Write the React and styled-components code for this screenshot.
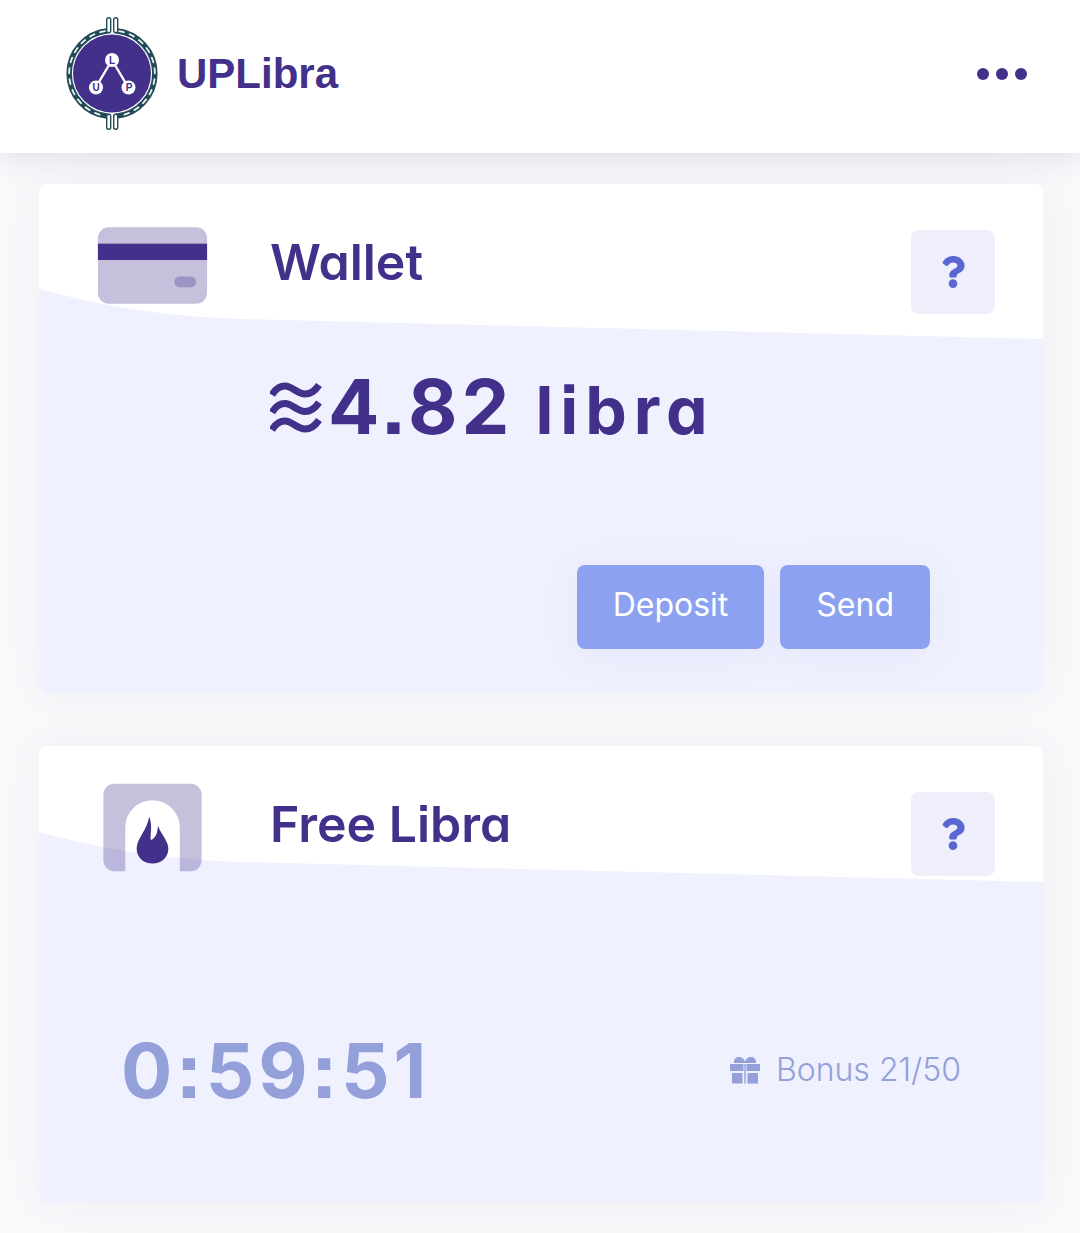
import styled, { createGlobalStyle } from "styled-components";
import { FaQuestion } from "react-icons/fa";

const GlobalStyle = createGlobalStyle`
  * {
    box-sizing: border-box;
  }

  body {
    margin: 0;
    background: #f9f9fc;
    color: #42308a;
    font-family: Inter, "Open Sans", sans-serif;
    font-feature-settings: "cv11", "ss07";
  }
`;

const Header = styled.header`
  position: relative;
  display: flex;
  align-items: center;
  justify-content: space-between;
  padding: 16px 53px 22px 66px;
  background: #fff;
  box-shadow: 0 2px 28px rgba(60, 60, 80, 0.16);
`;

const Brand = styled.a`
  display: flex;
  align-items: center;
  gap: 19px;
  color: inherit;
  font: bold 42px/48px "Liberation Sans", Arial, sans-serif;
  text-decoration: none;
`;

const MenuButton = styled.button`
  display: flex;
  gap: 7px;
  padding: 16px 0;
  border: 0;
  background: none;
`;

const Dot = styled.span`
  width: 12px;
  height: 12px;
  border-radius: 50%;
  background: #42308a;
`;

const Content = styled.main`
  display: grid;
  gap: 53px;
  padding: 31px 37px 30px 39px;
`;

const Card = styled.section`
  position: relative;
  border-radius: 8px;
  background: #fff;
  box-shadow: 0 0 40px rgba(80, 80, 100, 0.06);
`;

const Backdrop = styled.div`
  position: absolute;
  inset: ${({ $top }) => $top}px 0 0;
  display: flex;
  flex-direction: column;
  overflow: hidden;
  border-radius: 0 0 8px 8px;
`;

const Wave = styled.svg`
  display: block;
  flex: none;
  width: 100%;
  height: 51px;
  fill: #eff1fe;
`;

const Fill = styled.div`
  flex: 1;
  margin-top: -1px;
  background: #eff1fe;
`;

const CardBody = styled.div`
  position: relative;
  padding: 16px 48px 44px;
`;

const CardHead = styled.div`
  display: flex;
  align-items: center;
`;

const CardIcon = styled.svg`
  flex: none;
  width: 131px;
  height: 131px;
  fill: #42308a;
`;

const Title = styled.h2`
  flex: 1;
  margin: 0 0 8px 52px;
  font-size: 50px;
  font-weight: 600;
  line-height: 56px;
`;

const HelpButton = styled.button`
  display: grid;
  place-items: center;
  align-self: flex-start;
  width: 84px;
  height: 84px;
  margin-top: 30px;
  border: 0;
  border-radius: 8px;
  background: #eeeffb;
  color: #5a67d2;
  font-size: 32px;
`;

const Amount = styled.div`
  display: flex;
  align-items: baseline;
  margin: 27px 0 0 183px;
  font-size: 76px;
  font-weight: 700;
  line-height: 96px;
  letter-spacing: 4px;
`;

const Sign = styled.svg`
  width: 52px;
  height: 56px;
  margin-right: 6px;
  fill: none;
  stroke: #42308a;
  stroke-width: 7;
`;

const Unit = styled.span`
  margin-left: 22px;
  font-size: 66px;
  letter-spacing: 7px;
`;

const Actions = styled.div`
  display: flex;
  justify-content: flex-end;
  gap: 16px;
  padding: 107px 65px 0 0;
`;

const ActionButton = styled.button`
  padding: 16px 36px 20px;
  border: 0;
  border-radius: 8px;
  background: #8ca1f0;
  box-shadow: 0 6px 40px rgba(120, 110, 230, 0.08);
  color: #fff;
  font: inherit;
  font-size: 32px;
  font-weight: 400;
  font-feature-settings: inherit;
  line-height: 48px;
`;

const BonusRow = styled.div`
  display: flex;
  align-items: center;
  justify-content: space-between;
  padding: 129px 34px 41px 34px;
  color: #93a0d9;
`;

const Timer = styled.time`
  font-size: 76px;
  font-weight: 700;
  line-height: 96px;
  letter-spacing: 4px;
`;

const Bonus = styled.div`
  display: flex;
  align-items: center;
  gap: 16px;
  font-size: 32px;
  font-weight: 300;
  line-height: 48px;
`;

const Logo = () => (
  <svg width="92" height="115" viewBox="0 0 92 115" aria-hidden="true">
    <g fill="none" stroke="#234b57">
      <path d="M42 14.7A43 43 0 0 0 42 100.3M50 14.7A43 43 0 0 1 50 100.3" strokeWidth="5.5" />
      <path
        d="M39 15.1A43 43 0 0 0 39 99.9M53 15.1A43 43 0 0 1 53 99.9"
        stroke="#e6f0f2"
        strokeWidth="1.8"
        strokeLinecap="round"
        strokeDasharray="5 6"
      />
      <g fill="#fff" strokeWidth="1.4">
        <rect x="40.7" y="1.7" width="4" height="15" rx="2" />
        <rect x="47.7" y="1.7" width="4" height="15" rx="2" />
        <rect x="40.7" y="98.3" width="4" height="15" rx="2" />
        <rect x="47.7" y="98.3" width="4" height="15" rx="2" />
      </g>
    </g>
    <circle cx="46" cy="57.5" r="39" fill="#42308a" />
    <path d="M30 71L46 44L62 71" fill="none" stroke="#fff" strokeWidth="2.4" />
    <g fill="#fff">
      <circle cx="46" cy="44" r="7" />
      <circle cx="30" cy="71.5" r="7" />
      <circle cx="62.5" cy="71.5" r="7" />
    </g>
    <g fill="#42308a" fontFamily="Liberation Sans" fontSize="10" fontWeight="bold" textAnchor="middle">
      <text x="46" y="47.5">L</text>
      <text x="30" y="75">U</text>
      <text x="63" y="75">P</text>
    </g>
  </svg>
);

const WalletIcon = () => (
  <CardIcon viewBox="0 0 24 24" aria-hidden="true">
    <rect x="2" y="5" width="20" height="14" rx="2" opacity="0.3" />
    <rect x="2" y="8" width="20" height="3" />
    <rect x="16" y="14" width="4" height="2" rx="1" opacity="0.3" />
  </CardIcon>
);

const FireplaceIcon = () => (
  <CardIcon viewBox="0 0 24 24" aria-hidden="true">
    <path
      opacity="0.3"
      d="M5 4H19A2 2 0 0 1 21 6V18A2 2 0 0 1 19 20H17V12A5 5 0 0 0 7 12V20H5A2 2 0 0 1 3 18V6A2 2 0 0 1 5 4Z"
    />
    <path d="M11.4 10C11 12.6 9.1 14 9.1 15.9C9.1 17.5 10.4 18.6 12 18.6C13.6 18.6 14.9 17.5 14.9 15.9C14.9 14.5 13.7 13.5 13 11.7C12.9 13 12.6 14 11.7 14.3C11.5 13.6 12.1 11.9 11.4 10Z" />
  </CardIcon>
);

const GiftIcon = () => (
  <svg width="30" height="27" viewBox="0 0 30 27" fill="currentColor" aria-hidden="true">
    <path d="M4 5C4 2 6 0 9 0C12 0 14 2 15 4.4C16 2 18 0 21 0C24 0 26 2 26 5V6H4Z" />
    <path d="M0 7H13.5V14H0ZM16.5 7H30V14H16.5ZM2 16H12.5V26.500H2ZM17.5 16H28V26.500H17.5ZM14.3 7H15.7V26.5H14.3Z" />
  </svg>
);

const LibraSign = () => (
  <Sign viewBox="0 0 52 56" role="img" aria-label="≋">
    <path d="M2 17C6 10 10 8 15 8C22 8 27 16 35 16C41 16 45 13 49 7" />
    <path d="M2 34.5C6 27.5 10 25.5 15 25.5C22 25.5 27 33.5 35 33.5C41 33.5 45 30.5 49 24.5" />
    <path d="M2 52C6 45 10 43 15 43C22 43 27 51 35 51C41 51 45 48 49 42" />
  </Sign>
);

const WaveCard = ({ title, icon, waveTop, children }) => (
  <Card>
    <Backdrop $top={waveTop}>
      <Wave viewBox="0 0 1004 51" preserveAspectRatio="none">
        <path d="M0 0C60 16 120 27 200 30L1004 50V51H0Z" />
      </Wave>
      <Fill />
    </Backdrop>
    <CardBody>
      <CardHead>
        {icon}
        <Title>{title}</Title>
        <HelpButton type="button" aria-label={`About ${title}`}>
          <FaQuestion />
        </HelpButton>
      </CardHead>
      {children}
    </CardBody>
  </Card>
);

const App = () => {
  return (
    <>
      <GlobalStyle />
      <Header>
        <Brand href="#">
          <Logo />
          UPLibra
        </Brand>
        <MenuButton type="button" aria-label="Menu">
          <Dot />
          <Dot />
          <Dot />
        </MenuButton>
      </Header>
      <Content>
        <WaveCard title="Wallet" icon={<WalletIcon />} waveTop={105}>
          <Amount>
            <LibraSign />
            4.82
            <Unit>libra</Unit>
          </Amount>
          <Actions>
            <ActionButton type="button">Deposit</ActionButton>
            <ActionButton type="button">Send</ActionButton>
          </Actions>
        </WaveCard>
        <WaveCard title="Free Libra" icon={<FireplaceIcon />} waveTop={86}>
          <BonusRow>
            <Timer>0:59:51</Timer>
            <Bonus>
              <GiftIcon />
              Bonus 21/50
            </Bonus>
          </BonusRow>
        </WaveCard>
      </Content>
    </>
  );
};

export default App;
